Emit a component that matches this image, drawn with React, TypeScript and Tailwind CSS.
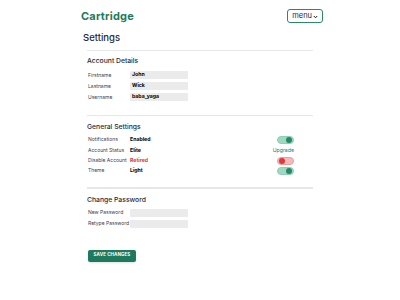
import React from "react";

function Toggle({ red }: { red?: boolean }) {
  return (
    <div
      className={
        "w-[17px] h-[8px] rounded-full flex items-center px-[1px] " +
        (red ? "bg-[#f6b9b9] justify-start border border-[#e7a0a0]" : "bg-[#9fd9c2] justify-end border border-[#8fcfb5]")
      }
    >
      <div className={"w-[6px] h-[6px] rounded-full " + (red ? "bg-[#e0393b]" : "bg-[#238a64]")} />
    </div>
  );
}

function Field({ label, value }: { label: string; value?: string }) {
  return (
    <div className="flex items-center h-[11px]">
      <div className="w-[42px] text-[5px] text-gray-700 whitespace-nowrap">{label}</div>
      <div className="w-[58px] h-[8px] bg-[#ebebeb] rounded-[1px] flex items-center pl-[2px] text-[5.2px] font-bold text-black">
        {value}
      </div>
    </div>
  );
}

function SettingRow({ label, value, valueClass, right }: { label: string; value: string; valueClass?: string; right: React.ReactNode }) {
  return (
    <div className="flex items-center h-[10.3px]">
      <div className="w-[42px] text-[5px] text-gray-700 whitespace-nowrap">{label}</div>
      <div className={"flex-1 text-[5.2px] font-bold " + (valueClass || "text-black")}>{value}</div>
      <div className="w-[22px] flex justify-end">{right}</div>
    </div>
  );
}

export default function App() {
  return (
    <div className="w-[400px] h-[300px] bg-white font-['Inter',sans-serif] overflow-hidden">
      <div className="ml-[81px] w-[242px] pt-[9px] flex items-center justify-between">
        <div className="text-[11px] font-bold text-[#1e7a5b] leading-none tracking-[0.2px]">Cartridge</div>
        <div className="h-[14px] px-[4px] border border-[#2a8a66] rounded-[3px] flex items-center text-[7.5px] text-gray-800">
          menu
          <svg width="5" height="4" viewBox="0 0 5 4" className="ml-[1px] mt-[1px]">
            <path d="M0.8 1 L2.5 2.8 L4.2 1" stroke="#222" strokeWidth="1" fill="none" />
          </svg>
        </div>
      </div>
      <div className="ml-[83px] mt-[10px] text-[9.5px] font-medium text-gray-800 leading-none">Settings</div>

      <div className="ml-[87px] w-[226px] mt-[7px] h-[1.5px] bg-gray-200" />
      <div className="ml-[87px] w-[226px] pt-[7px]">
        <div className="text-[6.8px] font-medium text-gray-800 leading-none">Account Details</div>
        <div className="mt-[5px] ml-[1px]">
          <Field label="Firstname" value="John" />
          <Field label="Lastname" value="Wick" />
          <Field label="Username" value="baba_yaga" />
        </div>
      </div>

      <div className="ml-[87px] w-[226px] mt-[12px] h-[1.5px] bg-gray-200" />
      <div className="ml-[87px] w-[226px] pt-[8px]">
        <div className="text-[6.8px] font-medium text-gray-800 leading-none">General Settings</div>
        <div className="mt-[4px] ml-[1px] w-[206px]">
          <SettingRow label="Notifications" value="Enabled" right={<Toggle />} />
          <SettingRow label="Account Status" value="Elite" right={<span className="text-[5.2px] text-[#1e7a5b]">Upgrade</span>} />
          <SettingRow label="Disable Account" value="Retired" valueClass="text-[#e0393b]" right={<Toggle red />} />
          <SettingRow label="Theme" value="Light" right={<Toggle />} />
        </div>
      </div>

      <div className="ml-[87px] w-[226px] mt-[11px] h-[1.5px] bg-gray-200" />
      <div className="ml-[87px] w-[226px] pt-[8px]">
        <div className="text-[6.8px] font-medium text-gray-800 leading-none">Change Password</div>
        <div className="mt-[4px] ml-[1px]">
          <Field label="New Password" />
          <Field label="Retype Password" />
        </div>
        <button className="mt-[20px] ml-[1px] w-[48px] h-[12px] bg-[#1e7a5f] rounded-[2px] text-white text-[4.5px] font-bold tracking-[0.1px] flex items-center justify-center shadow-sm">
          SAVE CHANGES
        </button>
      </div>
    </div>
  );
}
